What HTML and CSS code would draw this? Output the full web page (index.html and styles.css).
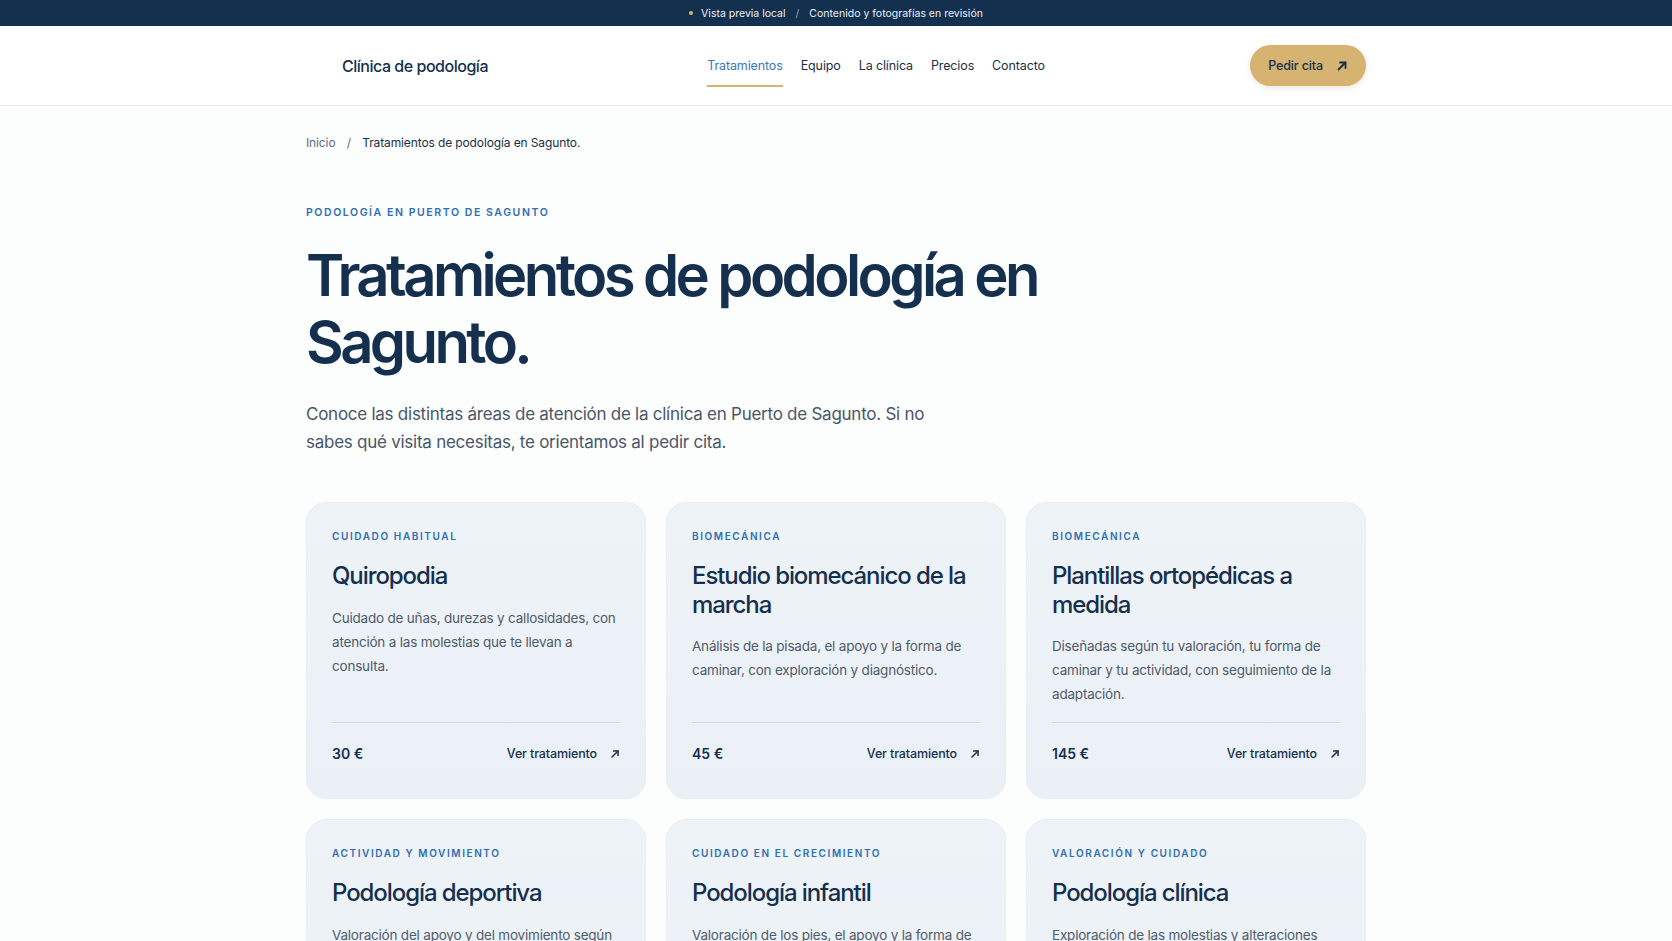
FILE: index.html
```html
<!DOCTYPE html>
<html lang="es">
<head>
    <meta charset="UTF-8">
    <meta name="viewport" content="width=device-width, initial-scale=1.0">
    <title>Tratamientos de podología en Sagunto - Clínica de podología</title>
    <link rel="stylesheet" href="styles.css">
</head>
<body>

    <!-- Aviso de entorno -->
    <div class="topbar">
        <span class="topbar-dot"></span>
        <span>Vista previa local</span>
        <span class="topbar-sep">/</span>
        <span>Contenido y fotografías en revisión</span>
    </div>

    <header class="site-header">
        <div class="header-inner">
            <a href="#" class="brand">
                <span class="brand-mark"></span>
                <span class="brand-name">Clínica de podología</span>
            </a>

            <nav class="main-nav">
                <a href="#" class="nav-link active">Tratamientos</a>
                <a href="#" class="nav-link">Equipo</a>
                <a href="#" class="nav-link">La clínica</a>
                <a href="#" class="nav-link">Precios</a>
                <a href="#" class="nav-link">Contacto</a>
            </nav>

            <a href="#" class="btn-cita">
                Pedir cita
                <svg class="arrow" width="12" height="12" viewBox="0 0 12 12" fill="none" stroke="currentColor" stroke-width="1.8" stroke-linecap="round" stroke-linejoin="round">
                    <path d="M2.5 9.5 9.5 2.5"/>
                    <path d="M4 2.5h5.5V8"/>
                </svg>
            </a>
        </div>
    </header>

    <main class="container">
        <div class="breadcrumb">
            <a href="#">Inicio</a>
            <span class="crumb-sep">/</span>
            <span class="crumb-current">Tratamientos de podología en Sagunto.</span>
        </div>

        <section class="hero">
            <p class="eyebrow">Podología en Puerto de Sagunto</p>
            <h1>Tratamientos de podología en Sagunto.</h1>
            <p class="lead">Conoce las distintas áreas de atención de la clínica en Puerto de Sagunto. Si no sabes qué visita necesitas, te orientamos al pedir cita.</p>
        </section>

        <section class="treatments">
            <article class="card">
                <p class="card-tag">Cuidado habitual</p>
                <h3>Quiropodia</h3>
                <p class="card-text">Cuidado de uñas, durezas y callosidades, con atención a las molestias que te llevan a consulta.</p>
                <div class="card-foot">
                    <span class="price">30 €</span>
                    <a href="#" class="card-link">Ver tratamiento
                        <svg width="10" height="10" viewBox="0 0 10 10" fill="none" stroke="currentColor" stroke-width="1.5" stroke-linecap="round" stroke-linejoin="round"><path d="M2 8 8 2"/><path d="M3.5 2H8v4.5"/></svg>
                    </a>
                </div>
            </article>

            <article class="card">
                <p class="card-tag">Biomecánica</p>
                <h3>Estudio biomecánico de la marcha</h3>
                <p class="card-text">Análisis de la pisada, el apoyo y la forma de caminar, con exploración y diagnóstico.</p>
                <div class="card-foot">
                    <span class="price">45 €</span>
                    <a href="#" class="card-link">Ver tratamiento
                        <svg width="10" height="10" viewBox="0 0 10 10" fill="none" stroke="currentColor" stroke-width="1.5" stroke-linecap="round" stroke-linejoin="round"><path d="M2 8 8 2"/><path d="M3.5 2H8v4.5"/></svg>
                    </a>
                </div>
            </article>

            <article class="card">
                <p class="card-tag">Biomecánica</p>
                <h3>Plantillas ortopédicas a medida</h3>
                <p class="card-text">Diseñadas según tu valoración, tu forma de caminar y tu actividad, con seguimiento de la adaptación.</p>
                <div class="card-foot">
                    <span class="price">145 €</span>
                    <a href="#" class="card-link">Ver tratamiento
                        <svg width="10" height="10" viewBox="0 0 10 10" fill="none" stroke="currentColor" stroke-width="1.5" stroke-linecap="round" stroke-linejoin="round"><path d="M2 8 8 2"/><path d="M3.5 2H8v4.5"/></svg>
                    </a>
                </div>
            </article>

            <article class="card">
                <p class="card-tag">Actividad y movimiento</p>
                <h3>Podología deportiva</h3>
                <p class="card-text">Valoración del apoyo y del movimiento según tu deporte, para prevenir lesiones y molestias.</p>
                <div class="card-foot">
                    <span class="price">50 €</span>
                    <a href="#" class="card-link">Ver tratamiento
                        <svg width="10" height="10" viewBox="0 0 10 10" fill="none" stroke="currentColor" stroke-width="1.5" stroke-linecap="round" stroke-linejoin="round"><path d="M2 8 8 2"/><path d="M3.5 2H8v4.5"/></svg>
                    </a>
                </div>
            </article>

            <article class="card">
                <p class="card-tag">Cuidado en el crecimiento</p>
                <h3>Podología infantil</h3>
                <p class="card-text">Valoración de los pies, el apoyo y la forma de caminar durante el crecimiento.</p>
                <div class="card-foot">
                    <span class="price">40 €</span>
                    <a href="#" class="card-link">Ver tratamiento
                        <svg width="10" height="10" viewBox="0 0 10 10" fill="none" stroke="currentColor" stroke-width="1.5" stroke-linecap="round" stroke-linejoin="round"><path d="M2 8 8 2"/><path d="M3.5 2H8v4.5"/></svg>
                    </a>
                </div>
            </article>

            <article class="card">
                <p class="card-tag">Valoración y cuidado</p>
                <h3>Podología clínica</h3>
                <p class="card-text">Exploración de las molestias y alteraciones que afectan al pie, con diagnóstico y plan de tratamiento.</p>
                <div class="card-foot">
                    <span class="price">35 €</span>
                    <a href="#" class="card-link">Ver tratamiento
                        <svg width="10" height="10" viewBox="0 0 10 10" fill="none" stroke="currentColor" stroke-width="1.5" stroke-linecap="round" stroke-linejoin="round"><path d="M2 8 8 2"/><path d="M3.5 2H8v4.5"/></svg>
                    </a>
                </div>
            </article>
        </section>
    </main>

</body>
</html>
```

FILE: styles.css
```css
/* Base de la página */
body {
    font-family: Inter, "Noto Sans", Arial, sans-serif;
    background-color: #fcfdfd;
    color: #17324f;
    margin: 0;
    -webkit-font-smoothing: antialiased;
}

a {
    color: inherit;
    text-decoration: none;
}

p, h1, h3 {
    margin: 0;
}

/* Barra superior de aviso */
.topbar {
    height: 26px;
    background-color: #14304f;
    color: #e9eef4;
    font-size: 10.5px;
    display: flex;
    align-items: center;
    justify-content: center;
}

.topbar-dot {
    width: 4px;
    height: 4px;
    border-radius: 50%;
    background: #d8b36a;
    margin-right: 8px;
}

.topbar-sep {
    margin: 0 10px;
    color: #8ea0b6;
}

/* Cabecera */
.site-header {
    background: #ffffff;
    border-bottom: 1px solid #e4eaf1;
}

.header-inner {
    max-width: 1060px;
    height: 79px;
    margin: 0 auto;
    display: flex;
    align-items: center;
    justify-content: space-between;
}

.brand {
    display: flex;
    align-items: center;
}

/* hueco reservado para el logotipo */
.brand-mark {
    width: 36px;
    height: 24px;
}

.brand-name {
    font-size: 16px;
    font-weight: 500;
    letter-spacing: -0.03em;
    color: #15304e;
}

.main-nav {
    display: flex;
    gap: 18px;
    margin-left: 14px;
}

.nav-link {
    font-size: 12.5px;
    letter-spacing: -0.01em;
    color: #1c2f46;
    padding: 12px 0 10px;
    border-bottom: 2px solid transparent;
    line-height: 18px;
}

.nav-link.active {
    color: #3a77bd;
    border-bottom-color: #d8b46f;
}

/* Botón principal */
.btn-cita {
    display: inline-flex;
    align-items: center;
    gap: 13px;
    height: 41px;
    padding: 0 18px;
    border-radius: 999px;
    background: #d6b370;
    color: #15304e;
    font-size: 12.5px;
    font-weight: 500;
    letter-spacing: -0.01em;
    box-shadow: 0 2px 6px rgba(150, 120, 60, 0.18);
}

/* Contenido principal */
.container {
    max-width: 1060px;
    margin: 0 auto;
    padding-bottom: 60px;
}

.breadcrumb {
    padding-top: 27px;
    font-size: 12px;
    line-height: 20px;
    letter-spacing: -0.01em;
    color: #5c6c80;
}

.crumb-sep {
    margin: 0 8px;
}

.crumb-current {
    color: #1c2f46;
}

/* Cabecera de la sección */
.eyebrow {
    margin-top: 53px;
    font-size: 10.5px;
    line-height: 14px;
    font-weight: 600;
    letter-spacing: 0.15em;
    text-transform: uppercase;
    color: #2f6db5;
}

.hero h1 {
    margin-top: 22px;
    font-size: 58px;
    line-height: 67px;
    font-weight: 600;
    letter-spacing: -0.062em;
    color: #15304e;
    max-width: 780px;
}

.lead {
    margin-top: 24px;
    max-width: 640px;
    font-size: 17px;
    line-height: 28px;
    letter-spacing: -0.015em;
    color: #4a5668;
}

/* Rejilla de tratamientos */
.treatments {
    margin-top: 46px;
    display: grid;
    grid-template-columns: repeat(3, 1fr);
    gap: 20px;
}

.card {
    display: flex;
    flex-direction: column;
    padding: 26px 25px 34px;
    border-radius: 20px;
    background: linear-gradient(180deg, #eef3f8 0%, #ebf0f6 100%);
    border: 1px solid #e8eef5;
}

.card-tag {
    font-size: 10px;
    line-height: 14px;
    font-weight: 600;
    letter-spacing: 0.16em;
    text-transform: uppercase;
    color: #2f6db5;
}

.card h3 {
    margin-top: 19px;
    font-size: 24px;
    line-height: 28.5px;
    font-weight: 500;
    letter-spacing: -0.045em;
    color: #15304e;
}

.card-text {
    margin-top: 15px;
    margin-bottom: 16px;
    font-size: 13.5px;
    line-height: 24px;
    letter-spacing: -0.015em;
    color: #4f5b6b;
}

.card-foot {
    margin-top: auto;
    border-top: 1px solid #cfdbe8;
    padding-top: 21px;
    display: flex;
    align-items: center;
    justify-content: space-between;
    line-height: 20px;
}

.price {
    font-size: 14px;
    font-weight: 600;
    color: #15304e;
}

.card-link {
    display: inline-flex;
    align-items: center;
    gap: 13px;
    font-size: 12.5px;
    font-weight: 500;
    letter-spacing: -0.01em;
    color: #15304e;
}
```
